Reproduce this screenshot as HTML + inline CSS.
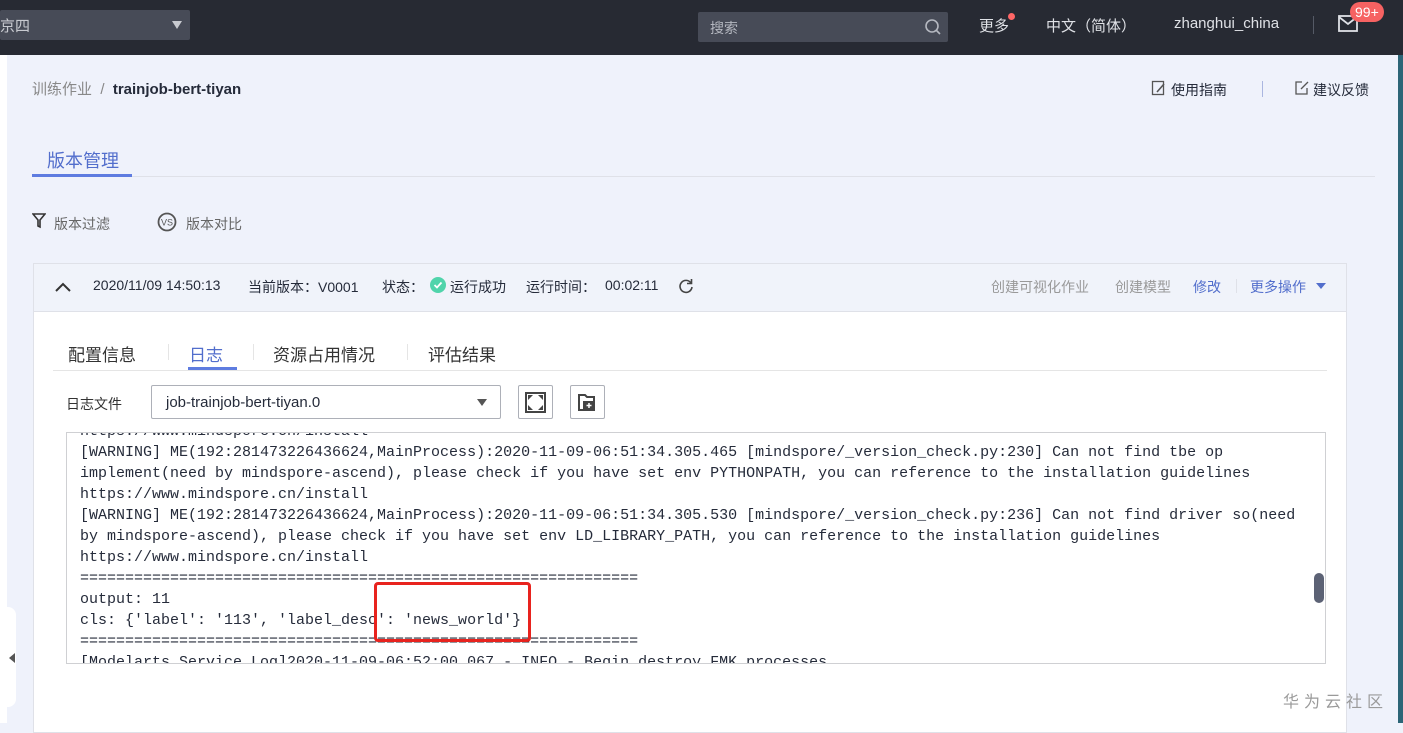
<!DOCTYPE html>
<html><head><meta charset="utf-8">
<style>
*{margin:0;padding:0;box-sizing:border-box}
body{width:1403px;height:723px;overflow:hidden;background:#eff2fb;font-family:"Liberation Sans","Noto Sans CJK SC",sans-serif;position:relative;color:#333}
.abs{position:absolute}
.top{left:0;top:0;width:1403px;height:55px;background:#272a33}
.t{white-space:nowrap}
.log{font-family:"Liberation Mono",monospace;font-size:15px;line-height:21px;color:#252b3a;white-space:pre}
.s{font-size:14px;color:#252b3a;top:277px}
</style></head><body>
<div class="abs top"></div>
<div class="abs" style="left:0;top:10px;width:190px;height:30px;background:#474b57;border-radius:2px"></div>
<div class="abs t" style="left:0;top:15px;color:#c8cad0;font-size:15px">京四</div>
<div class="abs" style="left:172px;top:21px;width:0;height:0;border-left:5px solid transparent;border-right:5px solid transparent;border-top:8px solid #c8cad0"></div>
<div class="abs" style="left:698px;top:12px;width:250px;height:30px;background:#474b57;border-radius:2px"></div>
<div class="abs t" style="left:710px;top:18px;color:#b5b8c0;font-size:14px">搜索</div>
<svg class="abs" style="left:924px;top:18px" width="18" height="18"><circle cx="8" cy="8" r="6" fill="none" stroke="#b5b8c0" stroke-width="1.6"/><line x1="12.5" y1="12.5" x2="16" y2="16" stroke="#b5b8c0" stroke-width="1.6"/></svg>
<div class="abs t" style="left:979px;top:15px;color:#dfe1e6;font-size:15px">更多</div>
<div class="abs" style="left:1008px;top:13px;width:7px;height:7px;border-radius:50%;background:#f66"></div>
<div class="abs t" style="left:1046px;top:15px;color:#dfe1e6;font-size:15px">中文（简体）</div>
<div class="abs t" style="left:1174px;top:15px;color:#dfe1e6;font-size:15px">zhanghui_china</div>
<div class="abs" style="left:1313px;top:16px;width:1px;height:18px;background:#555a66"></div>
<svg class="abs" style="left:1338px;top:15px" width="22" height="18"><rect x="1" y="1" width="18" height="15" fill="none" stroke="#dfe1e6" stroke-width="1.8"/><polyline points="1,2 10,9 19,2" fill="none" stroke="#dfe1e6" stroke-width="1.8"/></svg>
<div class="abs t" style="left:1350px;top:2px;height:20px;padding:0 5px;background:#f66262;color:#fff;font-size:14px;line-height:20px;border-radius:10px">99+</div>
<div class="abs" style="left:0;top:55px;width:7px;height:668px;background:#fff"></div>
<div class="abs" style="left:0;top:607px;width:16px;height:100px;background:#fff;border-radius:0 8px 8px 0"></div>
<div class="abs" style="left:9px;top:653px;width:0;height:0;border-top:5px solid transparent;border-bottom:5px solid transparent;border-right:6px solid #555"></div>
<div class="abs" style="left:1398px;top:55px;width:5px;height:668px;background:#2c6577"></div>
<div class="abs t" style="left:32px;top:78px;font-size:15px;color:#888">训练作业 &nbsp;/&nbsp; <b style="color:#252b3a">trainjob-bert-tiyan</b></div>
<svg class="abs" style="left:1151px;top:80px" width="16" height="16"><rect x="1.5" y="1.5" width="11" height="13" fill="none" stroke="#555" stroke-width="1.3"/><path d="M6 12 L13 4" stroke="#555" stroke-width="1.6"/></svg>
<div class="abs t" style="left:1171px;top:80px;font-size:14px;color:#252b3a">使用指南</div>
<div class="abs" style="left:1262px;top:81px;width:1px;height:16px;background:#aab6e0"></div>
<svg class="abs" style="left:1294px;top:80px" width="16" height="16"><path d="M8 2 H2 V14 H13 V8" fill="none" stroke="#555" stroke-width="1.3"/><path d="M7 9 L14 2" stroke="#555" stroke-width="1.3"/></svg>
<div class="abs t" style="left:1313px;top:80px;font-size:14px;color:#252b3a">建议反馈</div>
<div class="abs t" style="left:47px;top:147px;font-size:18px;color:#526ecc">版本管理</div>
<div class="abs" style="left:32px;top:176px;width:1343px;height:1px;background:#dfe1e8"></div>
<div class="abs" style="left:32px;top:174px;width:100px;height:3px;background:#5e7ce0"></div>
<svg class="abs" style="left:32px;top:213px" width="14" height="16"><path d="M1 1 H13 L8 7 V14 L6 13 V7 Z" fill="none" stroke="#333" stroke-width="1.6"/></svg>
<div class="abs t" style="left:54px;top:214px;font-size:14px;color:#666">版本过滤</div>
<svg class="abs" style="left:157px;top:212px" width="20" height="20"><circle cx="10" cy="10" r="8.5" fill="none" stroke="#555" stroke-width="1.8"/><text x="10" y="13.5" font-size="9" text-anchor="middle" fill="#555" font-family="Liberation Sans">VS</text></svg>
<div class="abs t" style="left:186px;top:214px;font-size:14px;color:#666">版本对比</div>
<div class="abs" style="left:33px;top:263px;width:1314px;height:470px;background:#fff;border:1px solid #dfe1e8"></div>
<div class="abs" style="left:34px;top:264px;width:1312px;height:48px;background:#f0f3fa;border-bottom:1px solid #dfe1e8"></div>
<svg class="abs" style="left:54px;top:280px" width="18" height="14"><polyline points="2,11 9,4 16,11" fill="none" stroke="#333" stroke-width="2"/></svg>
<div class="abs t s" style="left:93px">2020/11/09 14:50:13</div>
<div class="abs t s" style="left:248px">当前版本：V0001</div>
<div class="abs t s" style="left:382px">状态：</div>
<svg class="abs" style="left:430px;top:277px" width="16" height="16"><circle cx="8" cy="8" r="8" fill="#50d4ab"/><polyline points="4.5,8 7,10.5 11.5,5.5" fill="none" stroke="#fff" stroke-width="1.8"/></svg>
<div class="abs t s" style="left:450px">运行成功</div>
<div class="abs t s" style="left:526px">运行时间：</div>
<div class="abs t s" style="left:605px">00:02:11</div>
<svg class="abs" style="left:678px;top:278px" width="16" height="16"><path d="M13 5 A6 6 0 1 0 14 9" fill="none" stroke="#444" stroke-width="1.6"/><path d="M13.5 1 V5.5 H9" fill="none" stroke="#444" stroke-width="1.6"/></svg>
<div class="abs t s" style="left:991px;color:#999">创建可视化作业</div>
<div class="abs t s" style="left:1115px;color:#999">创建模型</div>
<div class="abs t s" style="left:1193px;color:#526ecc">修改</div>
<div class="abs" style="left:1236px;top:279px;width:1px;height:14px;background:#dfe1e8"></div>
<div class="abs t s" style="left:1250px;color:#526ecc">更多操作</div>
<div class="abs" style="left:1316px;top:283px;width:0;height:0;border-left:5px solid transparent;border-right:5px solid transparent;border-top:6px solid #526ecc"></div>
<div class="abs t" style="left:68px;top:341px;font-size:17px;color:#333">配置信息</div>
<div class="abs" style="left:168px;top:344px;width:1px;height:16px;background:#e5e5e5"></div>
<div class="abs t" style="left:189px;top:341px;font-size:17px;color:#526ecc">日志</div>
<div class="abs" style="left:188px;top:367px;width:49px;height:3px;background:#5e7ce0"></div>
<div class="abs" style="left:253px;top:344px;width:1px;height:16px;background:#e5e5e5"></div>
<div class="abs t" style="left:273px;top:341px;font-size:17px;color:#333">资源占用情况</div>
<div class="abs" style="left:407px;top:344px;width:1px;height:16px;background:#e5e5e5"></div>
<div class="abs t" style="left:428px;top:341px;font-size:17px;color:#333">评估结果</div>
<div class="abs" style="left:53px;top:370px;width:1274px;height:1px;background:#e5e5e5"></div>
<div class="abs t" style="left:66px;top:394px;font-size:14px;color:#333">日志文件</div>
<div class="abs" style="left:151px;top:385px;width:350px;height:34px;border:1px solid #adb0b8;border-radius:2px"></div>
<div class="abs t" style="left:166px;top:394px;font-size:15px;color:#252b3a">job-trainjob-bert-tiyan.0</div>
<div class="abs" style="left:477px;top:399px;width:0;height:0;border-left:5px solid transparent;border-right:5px solid transparent;border-top:7px solid #555"></div>
<div class="abs" style="left:518px;top:385px;width:35px;height:34px;border:1px solid #adb0b8;border-radius:2px"></div>
<svg class="abs" style="left:525px;top:392px" width="21" height="21"><rect x="1" y="1" width="19" height="19" fill="none" stroke="#444" stroke-width="2"/><path d="M3 3 h5 l-5 5z M18 3 h-5 l5 5z M3 18 h5 l-5 -5z M18 18 h-5 l5 -5z" fill="#444"/></svg>
<div class="abs" style="left:570px;top:385px;width:35px;height:34px;border:1px solid #adb0b8;border-radius:2px"></div>
<svg class="abs" style="left:577px;top:392px" width="20" height="20"><path d="M2 3 H8 L10 5 H17 V18 H2 Z" fill="none" stroke="#444" stroke-width="2"/><path d="M6 9 H18 V18 H6Z" fill="#444"/><path d="M12 11 V16 M9.5 13.5 H14.5" stroke="#fff" stroke-width="1.5"/></svg>
<div class="abs" style="left:66px;top:432px;width:1260px;height:232px;border:1px solid #cfd0d3;overflow:hidden;background:#fff">
<div class="log abs" style="left:13px;top:-12px">https://www.mindspore.cn/install
[WARNING] ME(192:281473226436624,MainProcess):2020-11-09-06:51:34.305.465 [mindspore/_version_check.py:230] Can not find tbe op
implement(need by mindspore-ascend), please check if you have set env PYTHONPATH, you can reference to the installation guidelines
https://www.mindspore.cn/install
[WARNING] ME(192:281473226436624,MainProcess):2020-11-09-06:51:34.305.530 [mindspore/_version_check.py:236] Can not find driver so(need
by mindspore-ascend), please check if you have set env LD_LIBRARY_PATH, you can reference to the installation guidelines
https://www.mindspore.cn/install
==============================================================
output: 11
cls: {'label': '113', 'label_desc': 'news_world'}
==============================================================
[Modelarts Service Log]2020-11-09-06:52:00.067 - INFO - Begin destroy FMK processes</div>
<div class="abs" style="left:1247px;top:140px;width:10px;height:30px;border-radius:5px;background:#5c6275"></div>
</div>
<div class="abs" style="left:374px;top:582px;width:157px;height:60px;border:3px solid #e8231e;border-radius:4px"></div>
<div class="abs t" style="left:1283px;top:688px;font-size:16px;color:#9a9a9a;letter-spacing:5px">华为云社区</div>
</body></html>
